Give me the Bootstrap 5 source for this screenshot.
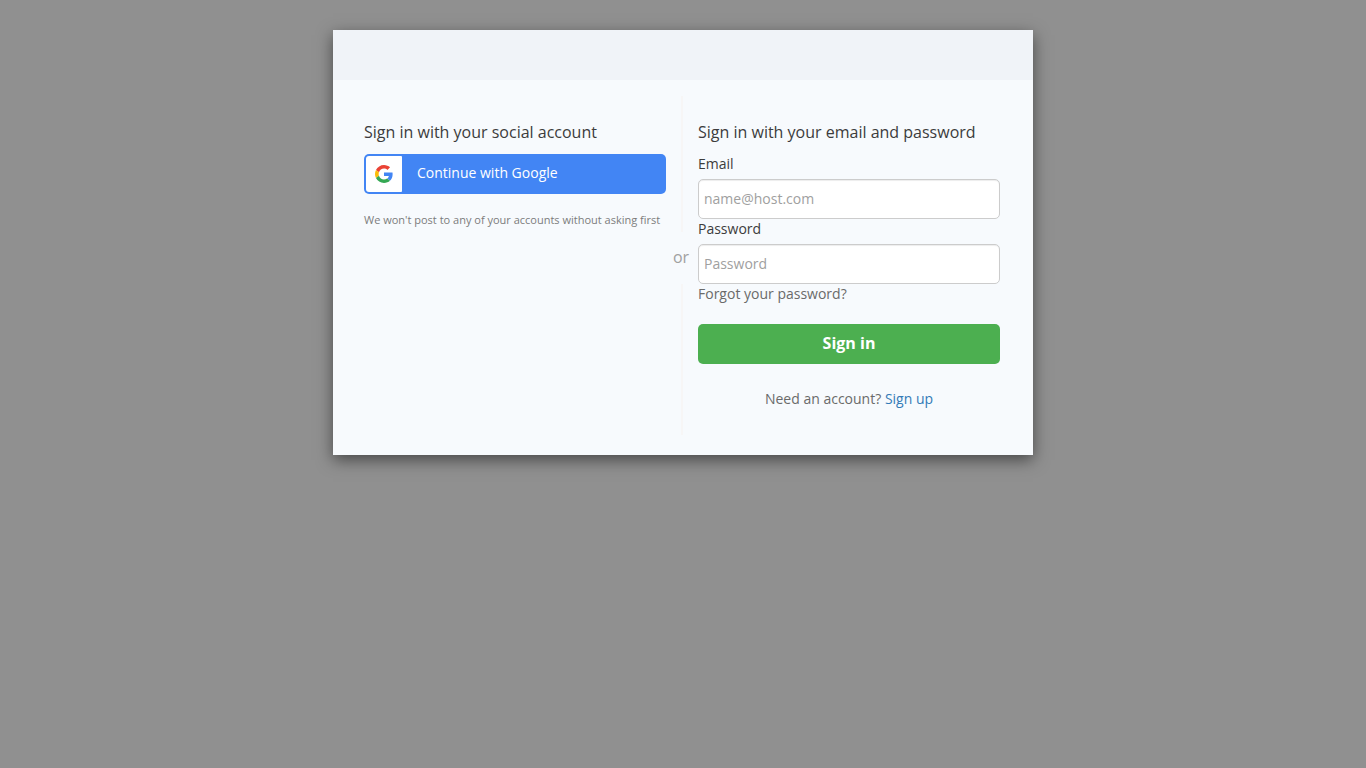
<!DOCTYPE html>
<html lang="en">
<head>
<meta charset="utf-8">
<meta name="viewport" content="width=device-width, initial-scale=1">
<title>Sign in</title>
<link href="https://cdn.jsdelivr.net/npm/bootstrap@5.3.0/dist/css/bootstrap.min.css" rel="stylesheet">
<style>
body{background:#909090;font-family:"Open Sans",sans-serif;font-size:14px;line-height:20px;color:#3c3c3c}
.signin-modal{max-width:700px;margin:30px auto;background:#f7fafd;box-shadow:0 5px 15px rgba(0,0,0,.5)}
.signin-banner{height:50px;background:#f0f3f8}
.signin-body{padding:16px 33px 20px 31px}
.panel-title{font-size:16px;line-height:22px;margin:0 0 11px;font-weight:400}
.side{flex:1 1 0;min-width:0;padding-top:25px}
.divider{width:32px;font-size:16px;color:#a0a0a0}
.divider-line{width:2px;background:#f7f6f6;flex:1 1 0}
.divider-line-top{flex:0 0 136px}
.divider-word{line-height:22px;padding:14px 2px 16px 0}
.btn-google{--bs-btn-color:#fff;--bs-btn-bg:#4285f4;--bs-btn-hover-color:#fff;--bs-btn-hover-bg:#3274e3;height:40px;border:0;border-radius:5px;padding:2px;font-size:14px;line-height:20px}
.google-tile{width:36px;height:36px;background:#fff;border-radius:3px 1px 1px 3px;margin-right:15px}
.google-text{padding-bottom:2px}
.fine-print{font-size:11px;line-height:16px;color:#7c7c7c;margin:18px 0 0}
.field-label{line-height:20px;margin-bottom:5px;display:block}
.field-input{height:40px;border:1px solid #ccc;border-radius:5px;padding:4px 5px 6px;font-size:14px;line-height:20px;box-shadow:inset 0 1px 1px rgba(0,0,0,.075)}
.field-input::placeholder{color:#a0a0a0}
.muted-link{color:#6a6a6a}
.btn-signin{--bs-btn-color:#fff;--bs-btn-bg:#4caf50;--bs-btn-hover-color:#fff;--bs-btn-hover-bg:#3f9b43;height:40px;border:0;border-radius:5px;padding:8px 12px 10px;font-size:16px;line-height:22px;font-weight:700;margin-top:20px}
.signup-line{color:#6a6a6a;margin:25px 0 26px}
.signup-line a{color:#337ab7}
</style>
</head>
<body>
<main class="signin-modal">
  <header class="signin-banner"></header>
  <div class="signin-body d-flex">
    <section class="side">
      <h1 class="panel-title">Sign in with your social account</h1>
      <button type="button" class="btn btn-google w-100 d-flex align-items-center">
        <span class="google-tile d-flex align-items-center justify-content-center">
          <svg width="18" height="18" viewBox="0 0 48 48" aria-hidden="true"><path fill="#ea4335" d="M24 9.500c3.540 0 6.710 1.220 9.210 3.600l6.850-6.850C35.900 2.380 30.470 0 24 0 14.620 0 6.510 5.380 2.560 13.220l7.980 6.190C12.430 13.720 17.740 9.500 24 9.500z"/><path fill="#4285f4" d="M46.980 24.550c0-1.570-.15-3.090-.38-4.550H24v9.020h12.940c-.58 2.960-2.260 5.480-4.780 7.180l7.730 6c4.510-4.180 7.090-10.360 7.090-17.650z"/><path fill="#fbbc05" d="M10.530 28.590c-.48-1.450-.76-2.990-.76-4.590s.27-3.140.76-4.590l-7.980-6.190C.92 16.460 0 20.120 0 24c0 3.880.92 7.540 2.560 10.780l7.970-6.190z"/><path fill="#34a853" d="M24 48c6.480 0 11.930-2.130 15.890-5.810l-7.730-6c-2.150 1.450-4.920 2.300-8.160 2.300-6.260 0-11.570-4.220-13.470-9.910l-7.980 6.190C6.510 42.620 14.620 48 24 48z"/></svg>
        </span>
        <span class="google-text">Continue with Google</span>
      </button>
      <p class="fine-print">We won't post to any of your accounts without asking first</p>
    </section>
    <div class="divider d-flex flex-column align-items-center">
      <span class="divider-line divider-line-top"></span><span class="divider-word">or</span><span class="divider-line"></span>
    </div>
    <section class="side">
      <h2 class="panel-title">Sign in with your email and password</h2>
      <form>
        <label class="field-label" for="email">Email</label>
        <input class="form-control field-input" id="email" type="email" placeholder="name@host.com">
        <label class="field-label" for="password">Password</label>
        <input class="form-control field-input" id="password" type="password" placeholder="Password">
        <a class="muted-link text-decoration-none d-block" href="#">Forgot your password?</a>
        <button type="submit" class="btn btn-signin w-100">Sign in</button>
      </form>
      <p class="signup-line text-center">Need an account? <a class="text-decoration-none" href="#">Sign up</a></p>
    </section>
  </div>
</main>
<script src="https://cdn.jsdelivr.net/npm/bootstrap@5.3.0/dist/js/bootstrap.bundle.min.js"></script>
</body>
</html>
